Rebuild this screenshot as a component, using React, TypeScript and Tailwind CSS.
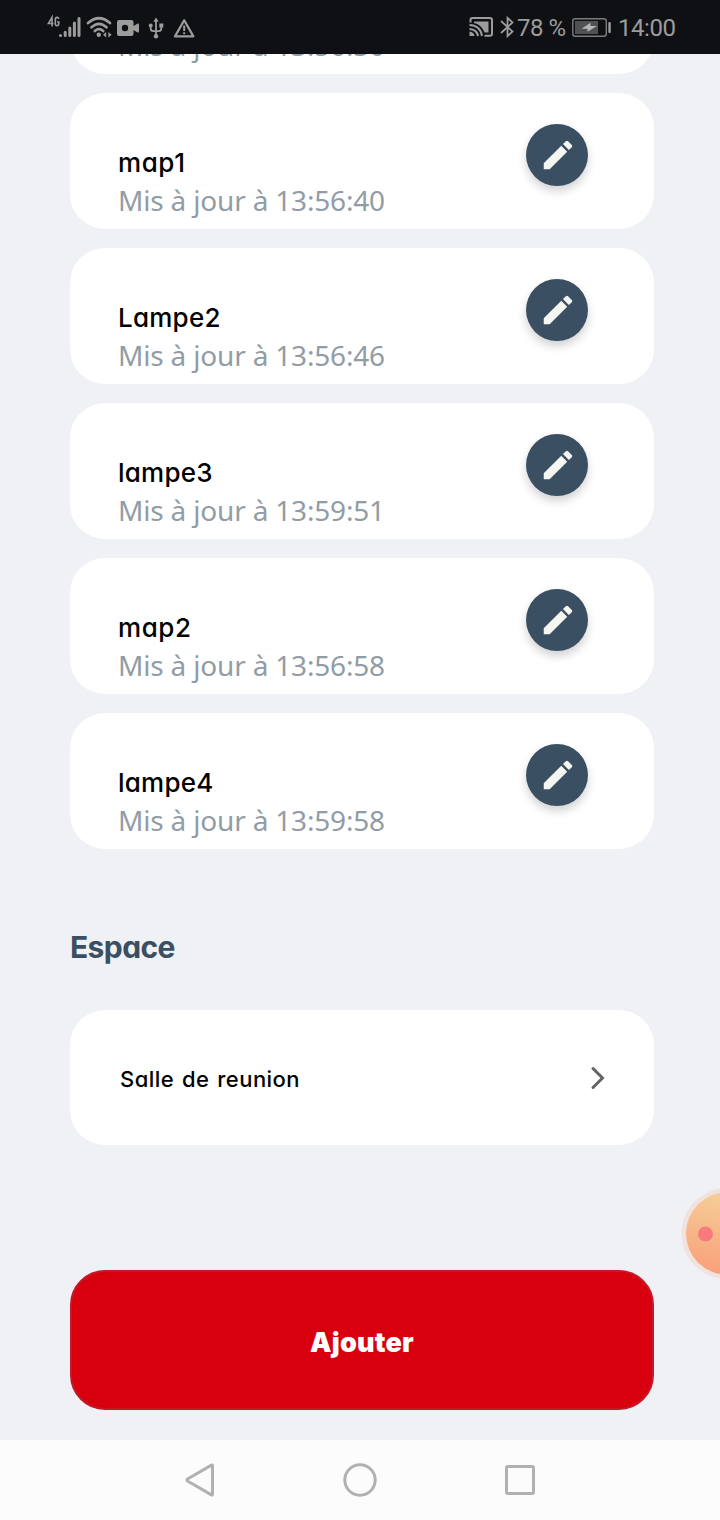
import React from "react";

const nameFont =
  "font-['Inter',sans-serif] [font-feature-settings:'cv11','ss03']";

const devices = [
  { name: "lampe1", time: "13:56:36" },
  { name: "map1", time: "13:56:40" },
  { name: "Lampe2", time: "13:56:46" },
  { name: "lampe3", time: "13:59:51" },
  { name: "map2", time: "13:56:58" },
  { name: "lampe4", time: "13:59:58" },
];

const nameSpacing: Record<string, string> = {
  map1: "tracking-[0.6px]",
  map2: "tracking-[0.6px]",
};

function StatusBar() {
  return (
    <header className="relative z-10 flex h-[54px] shrink-0 items-center bg-[#0f1014] font-['Roboto',sans-serif] text-2xl text-[#9c9c9c]">
      <svg className="ml-[46px] h-[54px] w-[36px] shrink-0" viewBox="46 0 36 54" fill="none" stroke="#9c9c9c">
        <path strokeWidth="1.6" d="M52 26.5V17.2L48.400 23.500H53.500M58.800 18.800Q58.500 17.400 57 17.400Q55.300 17.400 55.300 19.500V23.600Q55.300 25.700 57 25.700Q58.800 25.700 58.800 23.800V22H57" />
        <path strokeWidth="3" strokeLinecap="round" d="M60.500 35.400V35.600M65.200 32.200V35.600M69.800 28V35.600M74.400 23V35.600M79 18.500V35.600" />
      </svg>
      <svg className="ml-[4px] h-[54px] w-[28px] shrink-0" viewBox="86 0 28 54" fill="none" stroke="#9c9c9c">
        <path strokeWidth="2.700" strokeLinecap="round" d="M88 23Q99 13.500 110 23M91.500 27.300Q99 20.500 106.500 27.300M94.800 31Q99 27.200 103.200 31" />
        <circle cx="98.800" cy="34.700" r="2.200" fill="#9c9c9c" stroke="none" />
        <path fill="#9c9c9c" stroke="none" d="M103 34.700L106.200 32V37.400ZM111.600 34.700L108.400 32V37.400Z" />
      </svg>
      <svg className="ml-[3px] h-[54px] w-[23px] shrink-0" viewBox="117 0 23 54" fill="#9c9c9c">
        <path fillRule="evenodd" d="M119 20H131.500Q133.500 20 133.500 22V26L137.400 23.700Q139 23 139 24.700V31.500Q139 33.100 137.400 32.400L133.500 30V34Q133.500 36 131.500 36H119Q117 36 117 34V22Q117 20 119 20ZM125 24.800A3.200 3.200 0 1 0 125 31.200A3.200 3.200 0 1 0 125 24.800Z" />
      </svg>
      <svg className="ml-[8px] h-[54px] w-[16px] shrink-0" viewBox="148 0 16 54" fill="#9c9c9c">
        <path fill="none" stroke="#9c9c9c" strokeWidth="1.800" d="M156 20V36M150.700 26V28.500Q150.700 31.200 153.500 31.200H158.500Q161.300 31.200 161.300 28.500V26" />
        <path d="M156 17.500L158.700 21.800H153.300Z" />
        <circle cx="150.700" cy="25.500" r="2" />
        <circle cx="156" cy="36.300" r="2.200" />
        <path d="M159.300 23.500H163.300V27.500H159.300Z" />
      </svg>
      <svg className="ml-[9px] h-[54px] w-[24px] shrink-0" viewBox="173 0 24 54" fill="none" stroke="#9c9c9c">
        <path strokeWidth="2.200" strokeLinejoin="round" d="M184.200 20.200L193.400 36.400H175Z" />
        <path strokeWidth="2" d="M184.200 25.500V31M184.200 32.300V34.200" />
      </svg>
      <svg className="ml-[272px] h-[54px] w-[26px] shrink-0" viewBox="469 0 26 54" fill="none" stroke="#9c9c9c">
        <path strokeWidth="2" d="M470.500 22.500V20Q470.500 18 472.500 18H490Q492 18 492 20V33.700Q492 35.700 490 35.700H484.500" />
        <path fill="#9c9c9c" stroke="none" d="M474 21.500H488.500V32.500H484.500Q481 24 474 23Z" />
        <path strokeWidth="2" d="M469.500 25Q480.500 25.500 482 36M469.500 29Q477 29.500 478 36" />
        <path fill="#9c9c9c" stroke="none" d="M469.500 31.500Q474 32 474.500 36H469.500Z" />
      </svg>
      <svg className="ml-[5px] h-[54px] w-[14px] shrink-0" viewBox="500 0 14 54" fill="none" stroke="#9c9c9c">
        <path strokeWidth="1.800" d="M501 21L512.500 31.500L507.500 36.200V17.800L512.500 22.500L501 33" />
      </svg>
      <span className="ml-[3px] w-[51px] shrink-0 whitespace-nowrap pt-[2px] tracking-[-0.500px]">78 %</span>
      <svg className="ml-[4px] h-[54px] w-[40px] shrink-0" viewBox="572 0 40 54">
        <rect x="572.800" y="18.700" width="33.500" height="17.600" rx="2.500" fill="none" stroke="#7c7c7e" strokeWidth="1.400" />
        <rect x="575" y="21" width="23" height="13" fill="#505153" />
        <path fill="#b5b5b5" d="M590.500 22.800V26H597L587.500 31.800V28.800H581.500Z" />
        <rect x="608.300" y="22" width="2.500" height="11" rx="1" fill="#9c9c9c" />
      </svg>
      <span className="ml-[6px] shrink-0 whitespace-nowrap pt-[2px] tracking-[-0.450px]">14:00</span>
    </header>
  );
}

function DeviceCard({ name, time }: { name: string; time: string }) {
  return (
    <article className="flex h-[136px] shrink-0 justify-between rounded-[35px] bg-white pl-12 pr-[66px]">
      <div className="pt-[51px]">
        <h3 className={`${nameFont} text-[26px] leading-[37px] font-medium text-black ${nameSpacing[name] ?? "tracking-[0.25px]"}`}>
          {name}
        </h3>
        <p className="font-['Noto_Sans',sans-serif] text-[28px] leading-[38px] tracking-[-0.180px] text-[#929ca5]">
          Mis à jour à {time}
        </p>
      </div>
      <button
        aria-label="Modifier"
        className="mt-[31px] flex size-[62px] items-center justify-center rounded-full bg-[#3a4f62] shadow-[0_5px_10px_rgba(0,0,0,0.18)]"
      >
        <svg className="ml-[2px] size-[38px]" viewBox="0 0 24 24" fill="#f5f5f2">
          <path d="M3 17.250V21h3.750L17.810 9.940l-3.750-3.750L3 17.250zM20.710 7.040a.996.996 0 0 0 0-1.410l-2.340-2.340a.996.996 0 0 0-1.410 0l-1.830 1.830 3.750 3.750 1.830-1.830z" />
        </svg>
      </button>
    </article>
  );
}

function NavigationBar() {
  return (
    <nav className="flex h-20 shrink-0 items-center justify-center gap-[120px] bg-[#fcfcfc]">
      <svg className="size-10" viewBox="0 0 40 40" fill="none" stroke="#b1b1b1" strokeWidth="3" strokeLinejoin="round">
        <path d="M32.500 25.500V34.300Q32.500 35.500 31.500 34.900L7.500 21Q6.300 20 7.500 19L31.500 5.100Q32.500 4.500 32.500 5.700Z" />
      </svg>
      <svg className="size-10" viewBox="0 0 40 40" fill="none" stroke="#b1b1b1" strokeWidth="3">
        <circle cx="20" cy="20" r="15.200" />
      </svg>
      <svg className="size-10" viewBox="0 0 40 40" fill="none" stroke="#b1b1b1" strokeWidth="3">
        <rect x="6.500" y="6.500" width="27" height="27" rx="1.500" />
      </svg>
    </nav>
  );
}

export default function App() {
  return (
    <div className="relative flex h-[1520px] w-[720px] flex-col overflow-hidden bg-[#f0f1f5]">
      <StatusBar />
      <main className="flex h-[1386px] shrink-0 flex-col justify-end overflow-hidden pr-[66px] pb-[30px] pl-[70px]">
        <section className="flex shrink-0 flex-col gap-[19px]">
          {devices.map((d) => (
            <DeviceCard key={d.name} {...d} />
          ))}
        </section>
        <h2 className={`${nameFont} mt-[78px] h-10 shrink-0 text-[30px] leading-10 font-bold tracking-[-0.6px] text-[#3a4f62]`}>
          Espace
        </h2>
        <button className="mt-[43px] flex h-[135px] shrink-0 items-center justify-between rounded-[35px] bg-white pr-[48px] pl-[50px]">
          <span className={`${nameFont} pt-[3px] text-[22px] font-medium tracking-[0.45px] [word-spacing:1.6px] text-black`}>Salle de reunion</span>
          <svg className="h-6 w-4" viewBox="0 0 16 24" fill="none" stroke="#646464" strokeWidth="3" strokeLinecap="round">
            <path d="M3 2.500L12.500 12L3 21.500" />
          </svg>
        </button>
        <button className={`${nameFont} mt-[125px] flex h-[140px] shrink-0 items-center justify-center rounded-[35px] border-2 border-[#c4192a] bg-[#d8000f] pt-1.5 text-[27px] font-black tracking-[0.2px] text-white`}>
          Ajouter
        </button>
      </main>
      <NavigationBar />
      <svg className="absolute top-[1186px] right-0 h-24 w-10" viewBox="0 0 40 96">
        <defs>
          <linearGradient id="bubble" x1="0.600" y1="0" x2="0.400" y2="1">
            <stop offset="0" stopColor="#f5d09a" />
            <stop offset="1" stopColor="#f9a07a" />
          </linearGradient>
        </defs>
        <circle cx="47" cy="47.500" r="45.500" fill="#f0e2de" />
        <circle cx="47" cy="47.500" r="41" fill="url(#bubble)" />
        <circle cx="25.500" cy="48" r="7.500" fill="#f77a7c" />
      </svg>
    </div>
  );
}
